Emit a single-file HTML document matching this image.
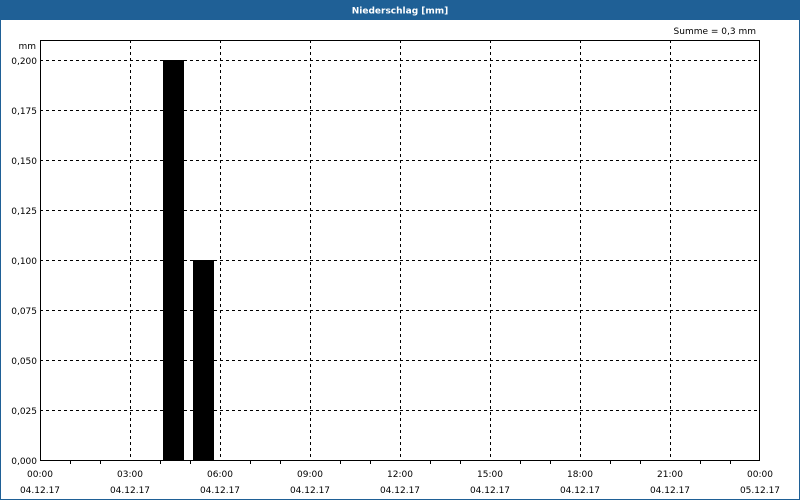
<!DOCTYPE html>
<html><head><style>
body{margin:0;width:800px;height:500px;overflow:hidden;background:#fff;font-family:"DejaVu Sans","Liberation Sans",sans-serif}
</style></head><body>
<svg width="800" height="500" xmlns="http://www.w3.org/2000/svg" font-family="DejaVu Sans, Liberation Sans, sans-serif" font-size="9">
<rect x="0" y="0" width="800" height="500" fill="#fff"/>
<rect x="0.5" y="0.5" width="799" height="499" fill="none" stroke="#1f6096"/>
<rect x="0" y="0" width="800" height="20" fill="#1f6096"/>
<text x="400" y="13.5" fill="#fff" font-weight="bold" text-anchor="middle">Niederschlag [mm]</text>
<text x="756" y="34" fill="#000" text-anchor="end">Summe = 0,3 mm</text>
<text x="36" y="49" text-anchor="end">mm</text>
<g stroke="#000" stroke-dasharray="3,3" stroke-width="1">
<line x1="40" y1="60.5" x2="760" y2="60.5"/><line x1="40" y1="110.5" x2="760" y2="110.5"/>
<line x1="40" y1="160.5" x2="760" y2="160.5"/><line x1="40" y1="210.5" x2="760" y2="210.5"/>
<line x1="40" y1="260.5" x2="760" y2="260.5"/><line x1="40" y1="310.5" x2="760" y2="310.5"/>
<line x1="40" y1="360.5" x2="760" y2="360.5"/><line x1="40" y1="410.5" x2="760" y2="410.5"/>
<line x1="130.5" y1="40" x2="130.5" y2="460"/><line x1="220.5" y1="40" x2="220.5" y2="460"/>
<line x1="310.5" y1="40" x2="310.5" y2="460"/><line x1="400.5" y1="40" x2="400.5" y2="460"/>
<line x1="490.5" y1="40" x2="490.5" y2="460"/><line x1="580.5" y1="40" x2="580.5" y2="460"/>
<line x1="670.5" y1="40" x2="670.5" y2="460"/>
</g>
<rect x="163" y="60" width="21" height="400" fill="#000"/>
<rect x="193" y="260" width="21" height="200" fill="#000"/>
<rect x="40.5" y="40.5" width="719" height="420" fill="none" stroke="#000"/>
<g stroke="#000">
<line x1="70.5" y1="460" x2="70.5" y2="464"/><line x1="100.5" y1="460" x2="100.5" y2="464"/>
<line x1="160.5" y1="460" x2="160.5" y2="464"/><line x1="190.5" y1="460" x2="190.5" y2="464"/>
<line x1="250.5" y1="460" x2="250.5" y2="464"/><line x1="280.5" y1="460" x2="280.5" y2="464"/>
<line x1="340.5" y1="460" x2="340.5" y2="464"/><line x1="370.5" y1="460" x2="370.5" y2="464"/>
<line x1="430.5" y1="460" x2="430.5" y2="464"/><line x1="460.5" y1="460" x2="460.5" y2="464"/>
<line x1="520.5" y1="460" x2="520.5" y2="464"/><line x1="550.5" y1="460" x2="550.5" y2="464"/>
<line x1="610.5" y1="460" x2="610.5" y2="464"/><line x1="640.5" y1="460" x2="640.5" y2="464"/>
<line x1="700.5" y1="460" x2="700.5" y2="464"/><line x1="730.5" y1="460" x2="730.5" y2="464"/>
</g>
<g text-anchor="end">
<text x="37" y="64">0,200</text><text x="37" y="114">0,175</text><text x="37" y="164">0,150</text>
<text x="37" y="214">0,125</text><text x="37" y="264">0,100</text><text x="37" y="314">0,075</text>
<text x="37" y="364">0,050</text><text x="37" y="414">0,025</text><text x="37" y="464">0,000</text>
</g>
<g text-anchor="middle">
<text x="40" y="477">00:00</text><text x="40" y="493">04.12.17</text>
<text x="130" y="477">03:00</text><text x="130" y="493">04.12.17</text>
<text x="220" y="477">06:00</text><text x="220" y="493">04.12.17</text>
<text x="310" y="477">09:00</text><text x="310" y="493">04.12.17</text>
<text x="400" y="477">12:00</text><text x="400" y="493">04.12.17</text>
<text x="490" y="477">15:00</text><text x="490" y="493">04.12.17</text>
<text x="580" y="477">18:00</text><text x="580" y="493">04.12.17</text>
<text x="670" y="477">21:00</text><text x="670" y="493">04.12.17</text>
<text x="760" y="477">00:00</text><text x="760" y="493">05.12.17</text>
</g>
</svg>
</body></html>
